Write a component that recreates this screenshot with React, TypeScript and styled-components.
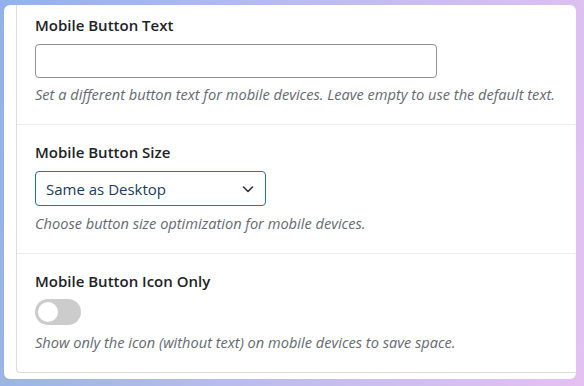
import React from "react";
import styled, { createGlobalStyle } from "styled-components";

const Global = createGlobalStyle`
  html, body { margin: 0; padding: 0; }
  body {
    width: 584px;
    height: 386px;
    overflow: hidden;
    font-family: "Open Sans", "Noto Sans", sans-serif;
    background: linear-gradient(100deg, #91b2e6 0%, #b9bcee 45%, #e6c0f2 100%);
  }
  * { box-sizing: border-box; }
`;

const Frame = styled.div`
  height: 386px;
  padding: 5px 8px 7px 4px;
  display: flex;
`;

const Panel = styled.div`
  flex: 1;
  background: #fff;
  border-radius: 6px;
  overflow: hidden;
  padding: 0 0 6px 12px;
  display: flex;
  flex-direction: column;
`;

const Card = styled.div`
  flex: 1;
  border-left: 1px solid #dcdcde;
  border-bottom: 1px solid #dcdcde;
  border-bottom-left-radius: 4px;
  display: flex;
  flex-direction: column;
`;

const Section = styled.div<{ $top: number; $last?: boolean }>`
  padding: ${(p) => p.$top}px 18px 0 18px;
  border-bottom: ${(p) => (p.$last ? "none" : "1px solid #ececec")};
  flex: ${(p) => (p.$last ? 1 : "none")};
  display: flex;
  flex-direction: column;
  align-items: flex-start;
`;

const Label = styled.div`
  font-size: 15px;
  font-weight: 600;
  line-height: 22px;
  color: #1d2327;
`;

const TextInput = styled.div`
  margin-top: 8px;
  width: 402px;
  height: 34px;
  border: 1px solid #8c8f94;
  border-radius: 4px;
  background: #fff;
`;

const Select = styled.div`
  margin-top: 8px;
  width: 231px;
  height: 35px;
  border: 1.5px solid #2271b1;
  border-radius: 4px;
  display: flex;
  align-items: center;
  justify-content: space-between;
  padding: 0 10px 0 10px;
  font-size: 15px;
  color: #1b3a5a;
`;

const Toggle = styled.div<{ $on?: boolean }>`
  margin-top: 7px;
  width: 46px;
  height: 26px;
  border-radius: 13px;
  background: ${(p) => (p.$on ? "#2271b1" : "#cccccc")};
  position: relative;
  &::after {
    content: "";
    position: absolute;
    top: 3px;
    left: 3px;
    width: 20px;
    height: 20px;
    border-radius: 50%;
    background: #fff;
  }
`;

const Help = styled.div<{ $top: number; $bottom: number }>`
  margin-top: ${(p) => p.$top}px;
  margin-bottom: ${(p) => p.$bottom}px;
  font-size: 14.6px;
  line-height: 21px;
  font-style: italic;
  color: #646970;
`;

const Chevron = () => (
  <svg width="14" height="14" viewBox="0 0 14 14" fill="none">
    <path d="M2.5 5 L7 9.5 L11.5 5" stroke="#2c3338" strokeWidth="1.6" strokeLinecap="round" strokeLinejoin="round" />
  </svg>
);

export default function App() {
  return (
    <>
      <Global />
      <Frame>
        <Panel>
          <Card>
            <Section $top={9}>
              <Label>Mobile Button Text</Label>
              <TextInput />
              <Help $top={6} $bottom={19}>
                Set a different button text for mobile devices. Leave empty to use the default text.
              </Help>
            </Section>
            <Section $top={16}>
              <Label>Mobile Button Size</Label>
              <Select>
                <span>Same as Desktop</span>
                <Chevron />
              </Select>
              <Help $top={7} $bottom={19}>Choose button size optimization for mobile devices.</Help>
            </Section>
            <Section $top={16} $last>
              <Label>Mobile Button Icon Only</Label>
              <Toggle />
              <Help $top={7} $bottom={0}>Show only the icon (without text) on mobile devices to save space.</Help>
            </Section>
          </Card>
        </Panel>
      </Frame>
    </>
  );
}
